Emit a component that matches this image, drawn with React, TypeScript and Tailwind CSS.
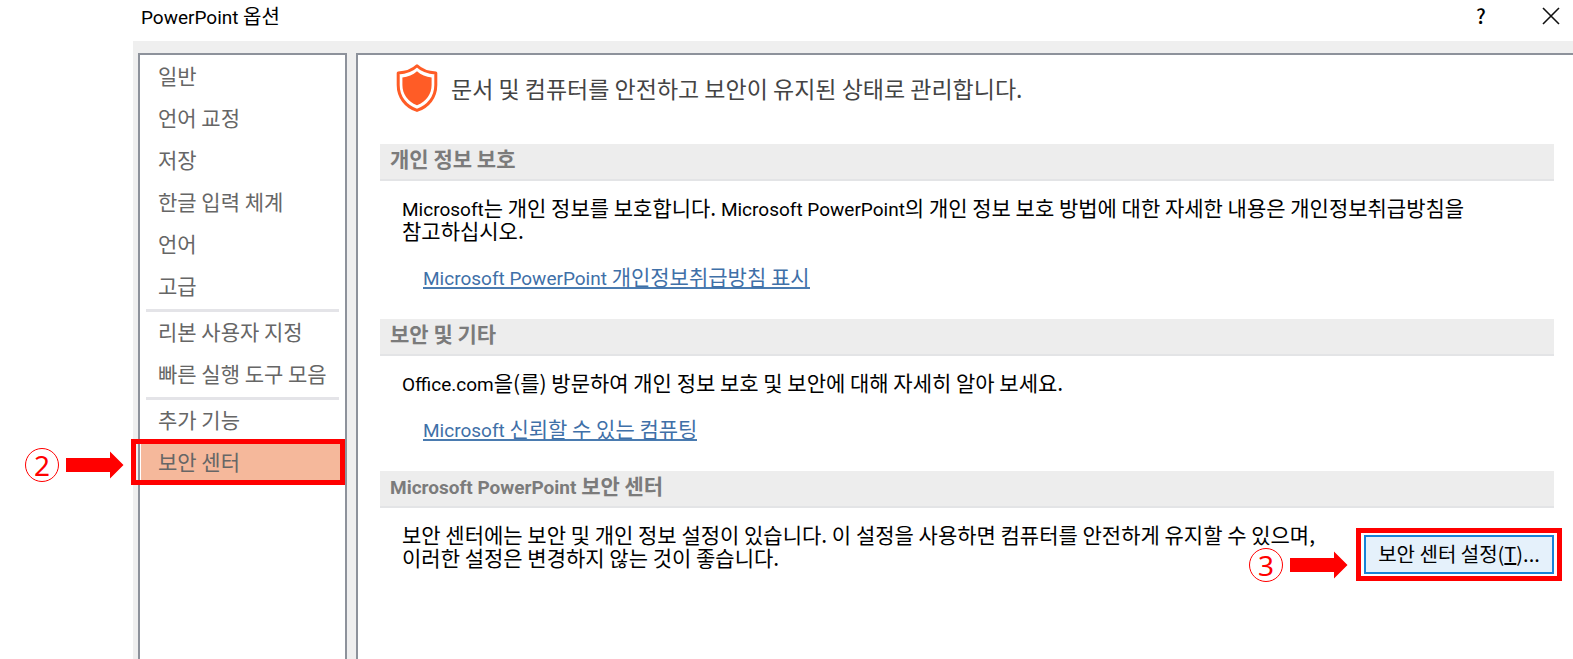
import type { ReactNode } from "react";

const menuGroups: string[][] = [
  ["일반", "언어 교정", "저장", "한글 입력 체계", "언어", "고급"],
  ["리본 사용자 지정", "빠른 실행 도구 모음"],
  ["추가 기능", "보안 센터"],
];

const selectedItem = "보안 센터";

function Shield() {
  return (
    <svg viewBox="0 0 42 48" className="h-12 w-[42px] shrink-0" aria-hidden="true">
      <path
        d="M21 1.8 C25.5 6.2 32.5 8.6 39.8 9 V21 C39.8 33 32.5 42.5 21 46.4 C9.500 42.500 2.200 33 2.200 21 V9 C9.500 8.600 16.500 6.200 21 1.800 Z"
        fill="#fff"
        stroke="#ff5c26"
        strokeWidth="3"
        strokeLinejoin="round"
      />
      <path
        d="M21 7.200 C25 10.800 30 12.800 35.600 13.500 V21 C35.600 30 30.500 37.300 21 41.300 C11.500 37.300 6.400 30 6.400 21 V13.500 C12 12.800 17 10.800 21 7.200 Z"
        fill="#ff5c26"
      />
    </svg>
  );
}

function Latin({ children }: { children: ReactNode }) {
  return <span className="font-[Roboto,sans-serif] text-[19px] leading-0">{children}</span>;
}

function Step({ number }: { number: number }) {
  return (
    <span className="flex items-center gap-[7px]">
      <span className="flex size-[34px] items-center justify-center rounded-full border border-[#ff0000] font-['Noto_Sans',sans-serif] text-[28px] leading-none text-[#ff0000]">
        {number}
      </span>
      <svg viewBox="0 0 58 28" className="h-7 w-[58px]" aria-hidden="true">
        <path d="M0 7 H44 V0.500 L57.500 14 L44 27.500 V21 H0 Z" fill="#ff0000" />
      </svg>
    </span>
  );
}

function Section({ title, children }: { title: ReactNode; children: ReactNode }) {
  return (
    <section className="pb-[30px]">
      <h2 className="mb-[15px] h-[37px] border-b-2 border-[#e3e4e6] bg-[#ededed] px-[10px] pt-[2px] leading-6 font-bold text-[#7b7b7b]">
        {title}
      </h2>
      <div className="pl-[22px]">{children}</div>
    </section>
  );
}

function DocLink({ children }: { children: ReactNode }) {
  return (
    <a
      href="#"
      className="mt-[23px] ml-[21px] block w-fit border-b-2 border-[#4a7bb0] leading-[22px] text-[#3f70a8]"
    >
      {children}
    </a>
  );
}

export default function App() {
  return (
    <div className="flex min-h-screen flex-col overflow-hidden bg-white pl-[133px] font-['Noto_Sans_CJK_KR',sans-serif] text-[21px] leading-[23px] text-black">
      <header className="flex h-[41px] items-center justify-between pr-[13px] pb-[10px] pl-2">
        <h1 className="text-[20px]">
          <Latin>PowerPoint</Latin> 옵션
        </h1>
        <div className="flex items-center gap-[53px]">
          <button type="button" aria-label="도움말" className="w-4 text-[20px] font-medium">
            ?
          </button>
          <button type="button" aria-label="닫기">
            <svg viewBox="0 0 18 18" className="size-[18px]" aria-hidden="true">
              <path d="M1 1 L17 17 M17 1 L1 17" stroke="#111" strokeWidth="1.600" fill="none" />
            </svg>
          </button>
        </div>
      </header>

      <div className="flex flex-1 gap-[9px] bg-[#efefef] pt-3 pl-[5px]">
        <nav className="w-[209px] shrink-0 border-2 border-b-0 border-[#8d929b] bg-white pt-px">
          {menuGroups.map((group, index) => (
            <ul key={index}>
              {index > 0 && <li aria-hidden="true" className="mx-[6px] mt-px h-[3px] bg-[#e4e4e8]" />}
              {group.map((item) =>
                item === selectedItem ? (
                  <li key={item} className="relative">
                    <button
                      type="button"
                      aria-current="page"
                      className="ml-px block h-[42px] w-[203px] bg-[#f5b89b] pb-[3px] pl-[17px] text-left text-[#666]"
                    >
                      {item}
                    </button>
                    <span className="pointer-events-none absolute -top-[3px] right-0 -bottom-px -left-[9px] border-5 border-[#ff0000]" />
                    <span className="absolute top-[6px] right-[221px]">
                      <Step number={2} />
                    </span>
                  </li>
                ) : (
                  <li key={item}>
                    <button type="button" className="block h-[42px] w-full pb-[3px] pl-[18px] text-left text-[#666]">
                      {item}
                    </button>
                  </li>
                ),
              )}
            </ul>
          ))}
        </nav>

        <main className="min-w-0 flex-1 border-t-2 border-l-2 border-[#8d929b] bg-white pr-[19px] pl-[22px]">
          <div className="mb-8 flex items-center gap-[13px] pt-[9px] pl-4">
            <Shield />
            <p className="text-[23px] text-[#444]">문서 및 컴퓨터를 안전하고 보안이 유지된 상태로 관리합니다.</p>
          </div>

          <Section title="개인 정보 보호">
            <p>
              <Latin>Microsoft</Latin>는 개인 정보를 보호합니다. <Latin>Microsoft PowerPoint</Latin>의 개인 정보 보호 방법에 대한
              자세한 내용은 개인정보취급방침을
              <br />
              참고하십시오.
            </p>
            <DocLink>
              <Latin>Microsoft PowerPoint</Latin> 개인정보취급방침 표시
            </DocLink>
          </Section>

          <Section title="보안 및 기타">
            <p>
              <Latin>Office.com</Latin>을(를) 방문하여 개인 정보 보호 및 보안에 대해 자세히 알아 보세요.
            </p>
            <DocLink>
              <Latin>Microsoft</Latin> 신뢰할 수 있는 컴퓨팅
            </DocLink>
          </Section>

          <Section
            title={
              <>
                <Latin>Microsoft PowerPoint</Latin> 보안 센터
              </>
            }
          >
            <div className="flex items-start justify-between">
              <p>
                보안 센터에는 보안 및 개인 정보 설정이 있습니다. 이 설정을 사용하면 컴퓨터를 안전하게 유지할 수 있으며,
                <br />
                이러한 설정은 변경하지 않는 것이 좋습니다.
              </p>
              <div className="relative mt-3 shrink-0">
                <button
                  type="button"
                  className="block h-[39px] w-[190px] border-2 border-[#1883d7] bg-[#e5f1fb] pb-[3px] text-[20px] whitespace-nowrap"
                >
                  보안 센터 설정(<span className="underline">T</span>)...
                </button>
                <span className="pointer-events-none absolute -inset-x-2 -inset-y-[7px] border-5 border-[#ff0000]" />
                <span className="absolute top-[13px] right-[206px]">
                  <Step number={3} />
                </span>
              </div>
            </div>
          </Section>
        </main>
      </div>
    </div>
  );
}
